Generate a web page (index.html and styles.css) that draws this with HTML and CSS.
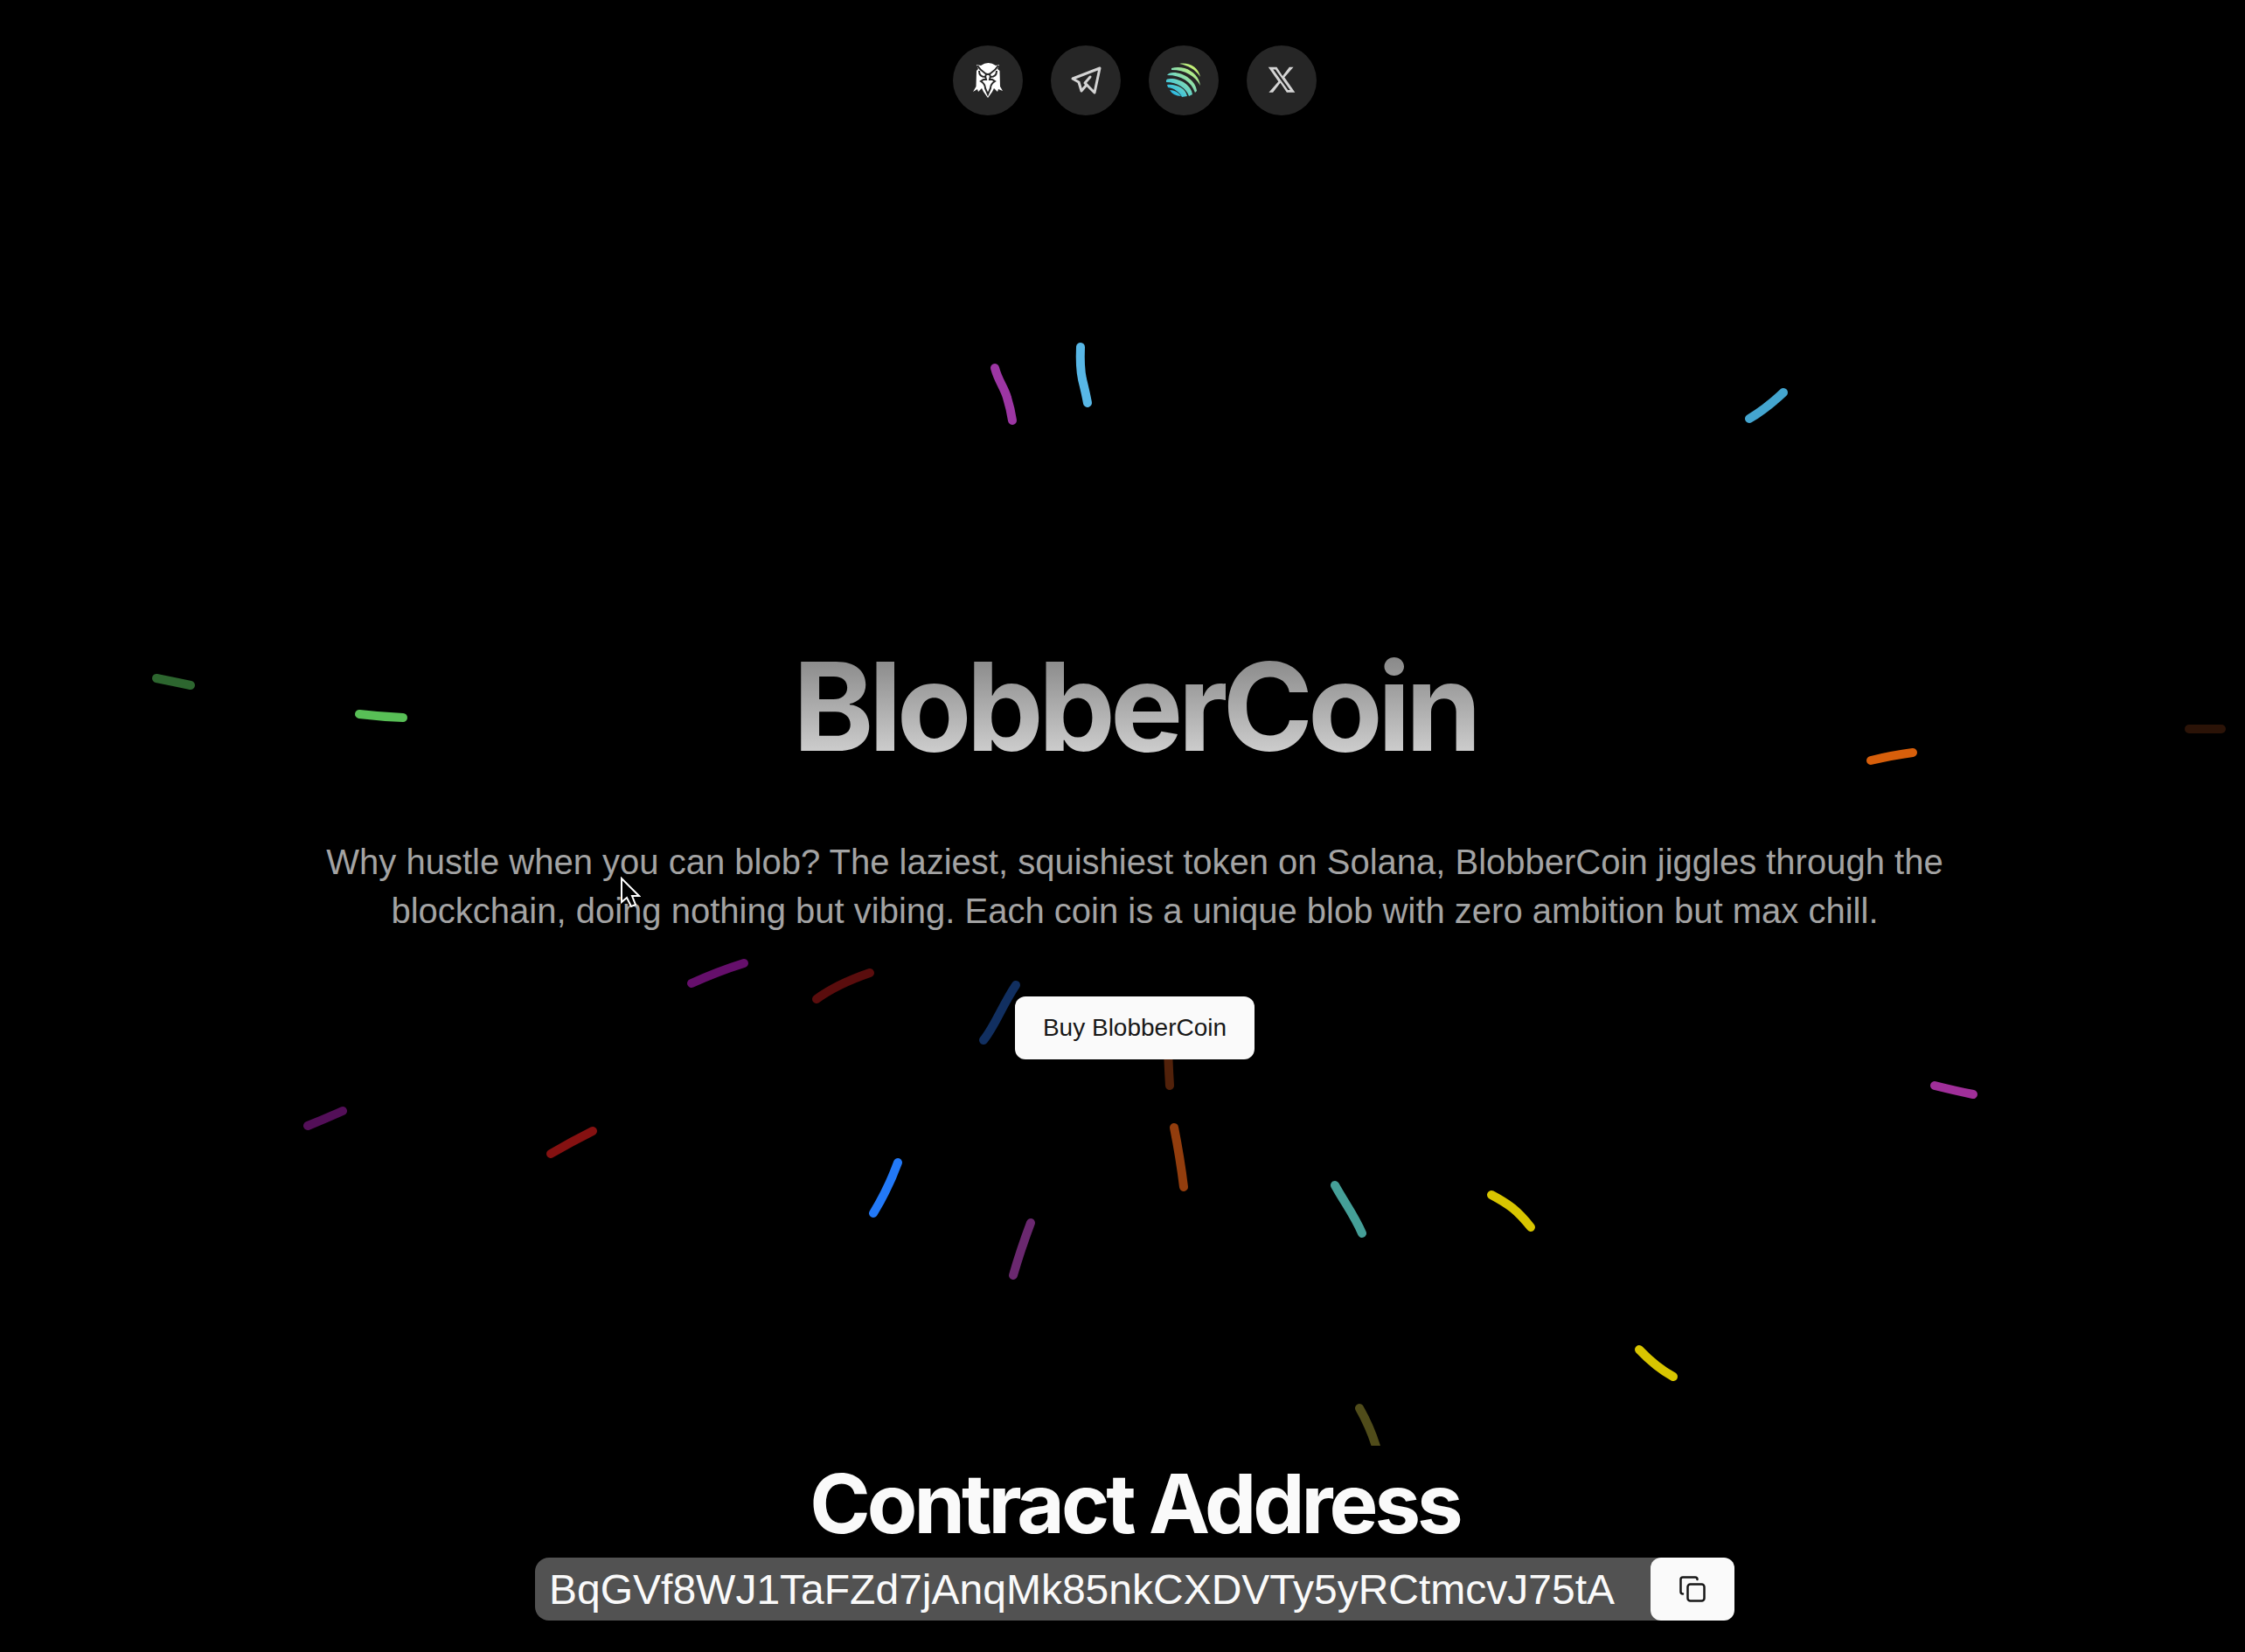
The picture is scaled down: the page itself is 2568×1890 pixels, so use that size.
FILE: index.html
```html
<!DOCTYPE html>
<html lang="en">
<head>
<meta charset="utf-8">
<meta name="viewport" content="width=device-width, initial-scale=1">
<title>BlobberCoin</title>
<link rel="stylesheet" href="styles.css">
</head>
<body>
<div class="page">
  <svg class="sparks" viewBox="0 0 2568 1654" preserveAspectRatio="xMidYMin slice" aria-hidden="true">
    <path stroke="#9c36a3" d="M1138 421C1142 436 1149 444 1152 455Q1156 468 1158 481"/>
    <path stroke="#58b7e6" d="M1236 397Q1235 420 1238 434Q1242 450 1244 461"/>
    <path stroke="#44a5cf" d="M2001 479Q2021 467 2040 449"/>
    <path stroke="#2d662f" d="M179 776Q199 780 218 784"/>
    <path stroke="#58bf56" d="M411 812Q436 815 461 816" transform="translate(0 5)"/>
    <path stroke="#2b1307" d="M2504 834L2541 834"/>
    <path stroke="#d75f0b" d="M2140 870Q2165 864 2188 861"/>
    <path stroke="#650f6b" d="M791 1125Q822 1111 851 1102"/>
    <path stroke="#5a0d0d" d="M934 1143Q957 1126 995 1113"/>
    <path stroke="#112f60" d="M1125 1190C1138 1174 1146 1151 1162 1127"/>
    <path stroke="#51210a" d="M1336 1190Q1336 1210 1338 1242"/>
    <path stroke="#923d0d" d="M1343 1290Q1350 1325 1354 1358"/>
    <path stroke="#530f58" d="M352 1288Q372 1280 392 1271"/>
    <path stroke="#851111" d="M630 1320Q654 1306 678 1294"/>
    <path stroke="#2279f8" d="M999 1388Q1016 1360 1027 1330"/>
    <path stroke="#6a286f" d="M1159 1459Q1167 1431 1179 1399"/>
    <path stroke="#459f98" d="M1527 1356C1538 1376 1549 1390 1558 1411"/>
    <path stroke="#d8c500" d="M1706 1367Q1721 1375 1730 1382Q1740 1390 1751 1404"/>
    <path stroke="#d8c500" d="M1875 1544Q1894 1564 1914 1575"/>
    <path stroke="#504c1a" d="M1555 1611Q1568 1634 1575 1658"/>
    <path stroke="#a02f99" d="M2213 1242Q2237 1248 2257 1252"/>
  </svg>
  <nav class="links" aria-label="Community">
    <a class="link" href="#dexscreener" aria-label="DEX Screener">
      <svg viewBox="0 0 40 40" width="40" height="40">
        <path fill="#fff" d="M12 3Q16 0 20.500 0Q25 0 29 3L33 2L31 7L33.500 9L34 27L37 32L32 30L31 33L27 29L25 33L20 40L15 33L13 29L9 33L8 30L3 33L6.500 27L7 9L9 7L7 2Z"/>
        <path fill="none" stroke="#262626" stroke-width="2" d="M8 3Q11 8 17 12Q20 14 23 12Q29 8 32 3M10 9Q10 16 17 16L18 13M30 9Q30 16 23 16L22 13M17 15L18 19L15 19L12 21Q17 24 17 29L20 36L23 29Q23 24 28 21L25 19L22 19L23 15"/>
      </svg>
    </a>
    <a class="link" href="#telegram" aria-label="Telegram">
      <svg viewBox="0 0 40 40" width="40" height="40" fill="none" stroke="#d4d4d4" stroke-width="3" stroke-linejoin="round" stroke-linecap="round">
        <path d="M5 18L36 6L30 34L21 25L15 32L12 22Z"/><path d="M21 25L19 23L25 16"/>
      </svg>
    </a>
    <a class="link" href="#jupiter" aria-label="Jupiter">
      <svg viewBox="0 0 40 40" width="40" height="40" fill="url(#jup)">
        <defs><linearGradient id="jup" x1="6" y1="36" x2="34" y2="4" gradientUnits="userSpaceOnUse"><stop stop-color="#22b8e8"/><stop offset=".5" stop-color="#82dcb5"/><stop offset="1" stop-color="#cef36b"/></linearGradient></defs>
        <path d="M15 1C26 -1 37 5 39 16C33 7 25 3 15 1Z"/>
        <path d="M6 6Q13 4 21 6C31 9 38 17 39 26C33 15 22 8 6 8Z"/>
        <path d="M1 14Q3 11 8 11C21 11 34 21 35 32L33 34C29 22 18 14 1 14Z"/>
        <path d="M0 20Q0 18 5 18C17 18 29 26 30 36L26 38C23 29 13 22 0 22Z"/>
        <path d="M1 25C12 24 22 29 24 38L18 39C15 33 9 29 2 28Z"/>
        <path d="M4 31Q12 31 17 38Q8 38 4 31Z"/>
      </svg>
    </a>
    <a class="link" href="#x" aria-label="X">
      <svg viewBox="0 0 24 24" width="34" height="34" fill="#d4d4d4"><path d="M18.244 1.250h3.308l-7.227 8.260 8.502 12.240H16.170l-5.214-7.817L4.990 21.750H1.680l7.730-8.835L1.254 1.250H8.080l4.713 7.231zm-1.161 18.520h1.833L7.084 3.126H5.117z"/></svg>
    </a>
  </nav>
  <main>
    <section class="hero">
      <h1 class="title">BlobberCoin</h1>
      <p class="lead">Why hustle when you can blob? The laziest, squishiest token on Solana, BlobberCoin jiggles through the blockchain, doing nothing but vibing. Each coin is a unique blob with zero ambition but max chill.</p>
      <button class="buy" type="button">Buy BlobberCoin</button>
    </section>
    <section class="contract">
      <h2 class="subtitle"><label for="address">Contract Address</label></h2>
      <div class="field">
        <input class="address" id="address" type="text" readonly value="BqGVf8WJ1TaFZd7jAnqMk85nkCXDVTy5yRCtmcvJ75tA">
        <button class="copy" type="button" aria-label="Copy address">
          <svg viewBox="0 0 30 30" width="30" height="30" fill="none" stroke="#171717" stroke-width="2.500" stroke-linecap="round" stroke-linejoin="round"><rect x="9.500" y="9.500" width="19" height="19" rx="3"/><path d="M4 20.500Q1.500 20.500 1.500 18V4Q1.500 1.500 4 1.500H18Q20.500 1.500 20.500 4"/></svg>
        </button>
      </div>
    </section>
  </main>
  <svg class="pointer" viewBox="0 0 24 38" width="24" height="38" aria-hidden="true"><path fill="#000" stroke="#fff" stroke-width="2" d="M2 2V29L8 24L13 34L18 32L14 22H22Z"/></svg>
</div>
</body>
</html>
```

FILE: styles.css
```css
* { box-sizing: border-box; }

body {
  margin: 0;
  background: #000;
  color: #fafafa;
  font-family: "Liberation Sans", Arial, sans-serif;
}

.page {
  position: relative;
  min-height: 100vh;
  padding: 52px 0 36px 28px;
  overflow: hidden;
}

.sparks {
  position: absolute;
  top: 0;
  left: 0;
  width: 100%;
  fill: none;
  stroke-width: 10;
  stroke-linecap: round;
}

.links {
  position: relative;
  display: flex;
  justify-content: center;
  gap: 32px;
}

.link {
  display: flex;
  align-items: center;
  justify-content: center;
  width: 80px;
  height: 80px;
  border-radius: 50%;
  background: #262626;
}

.hero {
  position: relative;
  display: flex;
  flex-direction: column;
  align-items: center;
  padding-top: 584px;
}

.title,
.subtitle {
  margin: 0;
  font-family: Inter, "Liberation Sans", sans-serif;
  font-weight: 700;
}

.title {
  font-size: 140px;
  line-height: 184px;
  letter-spacing: -6px;
  background: linear-gradient(#737373, #e5e5e5);
  background-clip: text;
  -webkit-background-clip: text;
  color: transparent;
}

.lead {
  max-width: 1920px;
  margin: 58px 0 70px;
  font-size: 40px;
  line-height: 56px;
  text-align: center;
  color: #a3a3a3;
}

.buy {
  height: 72px;
  padding: 0 32px;
  border: 0;
  border-radius: 12px;
  background: #fafafa;
  color: #171717;
  font: 28px "Liberation Sans", Arial, sans-serif;
}

.contract {
  position: relative;
  display: flex;
  flex-direction: column;
  align-items: center;
  padding-top: 460px;
}

.subtitle {
  font-size: 94px;
  line-height: 96px;
  letter-spacing: -4px;
}

.field {
  display: flex;
  width: 1372px;
  max-width: 100%;
  margin-top: 14px;
  border-radius: 16px;
  background: #525252;
}

.address {
  flex: 1;
  min-width: 0;
  height: 72px;
  padding: 0 16px;
  border: 0;
  background: none;
  color: #fafafa;
  font: 48px "Liberation Sans", Arial, sans-serif;
}

.copy {
  display: flex;
  align-items: center;
  justify-content: center;
  width: 96px;
  border: 0;
  border-radius: 12px;
  background: #fafafa;
}

.pointer {
  position: absolute;
  top: 1003px;
  left: 709px;
}
```
